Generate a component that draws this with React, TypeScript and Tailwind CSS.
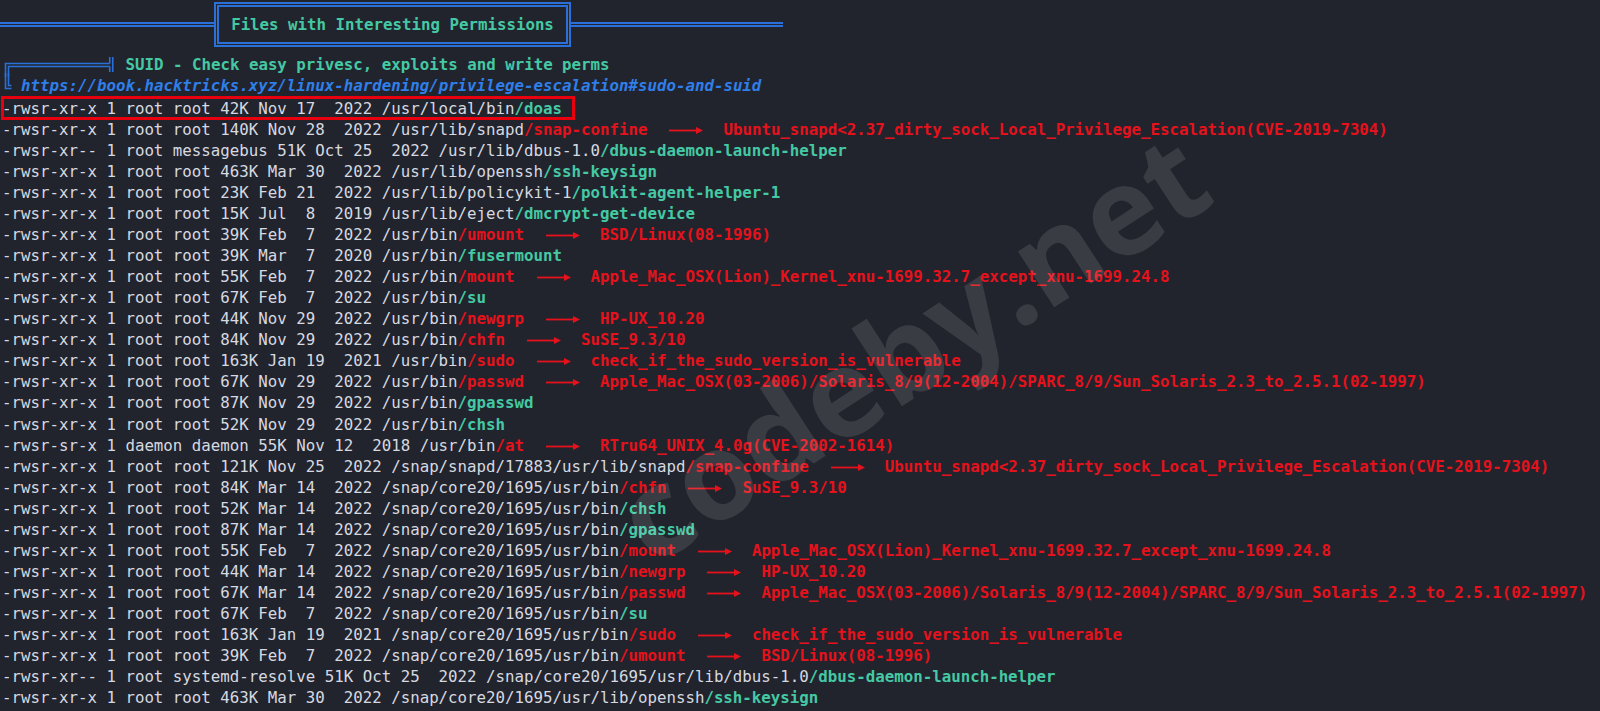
import React from "react";

type Row = {
    pre: string
    hit: string
    kind: "red" | "teal"
    note?: string
}

const LION = "Apple_Mac_OSX(Lion)_Kernel_xnu-1699.32.7_except_xnu-1699.24.8";
const PASSWD = "Apple_Mac_OSX(03-2006)/Solaris_8/9(12-2004)/SPARC_8/9/Sun_Solaris_2.3_to_2.5.1(02-1997)";
const SNAPD = "Ubuntu_snapd<2.37_dirty_sock_Local_Privilege_Escalation(CVE-2019-7304)";
const SUDO = "check_if_the_sudo_version_is_vulnerable";
const CORE = "/snap/core20/1695/usr/bin";

const rows: Row[] = [
    { pre: "-rwsr-xr-x 1 root root 42K Nov 17  2022 /usr/local/bin", hit: "/doas", kind: "teal" },
    { pre: "-rwsr-xr-x 1 root root 140K Nov 28  2022 /usr/lib/snapd", hit: "/snap-confine", kind: "red", note: SNAPD },
    { pre: "-rwsr-xr-- 1 root messagebus 51K Oct 25  2022 /usr/lib/dbus-1.0", hit: "/dbus-daemon-launch-helper", kind: "teal" },
    { pre: "-rwsr-xr-x 1 root root 463K Mar 30  2022 /usr/lib/openssh", hit: "/ssh-keysign", kind: "teal" },
    { pre: "-rwsr-xr-x 1 root root 23K Feb 21  2022 /usr/lib/policykit-1", hit: "/polkit-agent-helper-1", kind: "teal" },
    { pre: "-rwsr-xr-x 1 root root 15K Jul  8  2019 /usr/lib/eject", hit: "/dmcrypt-get-device", kind: "teal" },
    { pre: "-rwsr-xr-x 1 root root 39K Feb  7  2022 /usr/bin", hit: "/umount", kind: "red", note: "BSD/Linux(08-1996)" },
    { pre: "-rwsr-xr-x 1 root root 39K Mar  7  2020 /usr/bin", hit: "/fusermount", kind: "teal" },
    { pre: "-rwsr-xr-x 1 root root 55K Feb  7  2022 /usr/bin", hit: "/mount", kind: "red", note: LION },
    { pre: "-rwsr-xr-x 1 root root 67K Feb  7  2022 /usr/bin", hit: "/su", kind: "teal" },
    { pre: "-rwsr-xr-x 1 root root 44K Nov 29  2022 /usr/bin", hit: "/newgrp", kind: "red", note: "HP-UX_10.20" },
    { pre: "-rwsr-xr-x 1 root root 84K Nov 29  2022 /usr/bin", hit: "/chfn", kind: "red", note: "SuSE_9.3/10" },
    { pre: "-rwsr-xr-x 1 root root 163K Jan 19  2021 /usr/bin", hit: "/sudo", kind: "red", note: SUDO },
    { pre: "-rwsr-xr-x 1 root root 67K Nov 29  2022 /usr/bin", hit: "/passwd", kind: "red", note: PASSWD },
    { pre: "-rwsr-xr-x 1 root root 87K Nov 29  2022 /usr/bin", hit: "/gpasswd", kind: "teal" },
    { pre: "-rwsr-xr-x 1 root root 52K Nov 29  2022 /usr/bin", hit: "/chsh", kind: "teal" },
    { pre: "-rwsr-sr-x 1 daemon daemon 55K Nov 12  2018 /usr/bin", hit: "/at", kind: "red", note: "RTru64_UNIX_4.0g(CVE-2002-1614)" },
    { pre: "-rwsr-xr-x 1 root root 121K Nov 25  2022 /snap/snapd/17883/usr/lib/snapd", hit: "/snap-confine", kind: "red", note: SNAPD },
    { pre: `-rwsr-xr-x 1 root root 84K Mar 14  2022 ${CORE}`, hit: "/chfn", kind: "red", note: "SuSE_9.3/10" },
    { pre: `-rwsr-xr-x 1 root root 52K Mar 14  2022 ${CORE}`, hit: "/chsh", kind: "teal" },
    { pre: `-rwsr-xr-x 1 root root 87K Mar 14  2022 ${CORE}`, hit: "/gpasswd", kind: "teal" },
    { pre: `-rwsr-xr-x 1 root root 55K Feb  7  2022 ${CORE}`, hit: "/mount", kind: "red", note: LION },
    { pre: `-rwsr-xr-x 1 root root 44K Mar 14  2022 ${CORE}`, hit: "/newgrp", kind: "red", note: "HP-UX_10.20" },
    { pre: `-rwsr-xr-x 1 root root 67K Mar 14  2022 ${CORE}`, hit: "/passwd", kind: "red", note: PASSWD },
    { pre: `-rwsr-xr-x 1 root root 67K Feb  7  2022 ${CORE}`, hit: "/su", kind: "teal" },
    { pre: `-rwsr-xr-x 1 root root 163K Jan 19  2021 ${CORE}`, hit: "/sudo", kind: "red", note: SUDO },
    { pre: `-rwsr-xr-x 1 root root 39K Feb  7  2022 ${CORE}`, hit: "/umount", kind: "red", note: "BSD/Linux(08-1996)" },
    { pre: "-rwsr-xr-- 1 root systemd-resolve 51K Oct 25  2022 /snap/core20/1695/usr/lib/dbus-1.0", hit: "/dbus-daemon-launch-helper", kind: "teal" },
    { pre: "-rwsr-xr-x 1 root root 463K Mar 30  2022 /snap/core20/1695/usr/lib/openssh", hit: "/ssh-keysign", kind: "teal" },
]

// the ligature "--->" as drawn by the terminal font
function Arrow() {
    return (
        <svg width="38" height="21" className="inline-block align-top overflow-visible">
            <line x1="3" y1="11.5" x2="33" y2="11.5" stroke="#e5121c" strokeWidth="1.8" />
            <path d="M30 8 L37 11.5 L30 15 Z" fill="#e5121c" />
        </svg>
    )
}

const BLUE = "#2b6fd8";

// ╔══════════╣
function Bracket() {
    return (
        <svg width="114" height="21" className="inline-block align-top overflow-visible" fill="none" stroke={BLUE} strokeWidth="1.6">
            <path d="M3.5 23 V9.5 H107.75" />
            <path d="M6.5 23 V12.5 H107.75" />
            <path d="M107.75 3 V9.5 M107.75 12.5 V18" />
            <path d="M110.75 3 V18" />
        </svg>
    )
}

// ╚
function Corner() {
    return (
        <svg width="9.5" height="21" className="inline-block align-top overflow-visible" fill="none" stroke={BLUE} strokeWidth="1.6">
            <path d="M3.5 -2 V13.5 H9.5" />
            <path d="M6.5 -2 V10.5 H9.5" />
        </svg>
    )
}

export default function App() {
    return (
        <div className="relative w-full h-[711px] overflow-hidden bg-[#22242d] font-['DejaVu_Sans_Mono',monospace] text-[15.78px] text-[#d6d9e0]">

            {/* section title */}
            <div className="h-[54px]">
                <div className="flex items-center h-[49px]">
                    <div className="w-[214px] h-[5px] border-y-2 border-[#2b6fd8]" />
                    <div className="w-[357px] h-[45px] border-2 border-[#2b6fd8] p-[1px]">
                        <div className="h-full border-2 border-[#2b6fd8] flex items-center justify-center font-bold text-[#44c9a4]">
                            Files with Interesting Permissions
                        </div>
                    </div>
                    <div className="w-[212px] h-[5px] border-y-2 border-[#2b6fd8]" />
                </div>
            </div>

            <div className="pl-[2px] leading-[21.07px] whitespace-pre">
                <div className="h-[21.07px]">
                    <Bracket /> <span className="font-bold text-[#44c9a4]">SUID - Check easy privesc, exploits and write perms</span>
                </div>
                <div className="h-[22.5px]">
                    <Corner /> <span className="font-bold italic text-[#2f7fea]">https://book.hacktricks.xyz/linux-hardening/privilege-escalation#sudo-and-suid</span>
                </div>

                {rows.map((r, i) => (
                    <div key={i} className="relative h-[21.07px]">
                        <span>{r.pre}</span>
                        <span className={r.kind === "red" ? "font-bold text-[#e5121c]" : "font-bold text-[#44c9a4]"}>{r.hit}</span>
                        {r.note ? (
                            <>
                                <span>  </span>
                                <Arrow />
                                <span>  </span>
                                <span className="font-bold text-[#e5121c]">{r.note}</span>
                            </>
                        ) : null}
                        {i === 0 ? (
                            <div className="absolute left-[-1px] top-[-2px] w-[574px] h-[24px] border-[3px] border-[#e8000e]" />
                        ) : null}
                    </div>
                ))}
            </div>

            {/* watermark */}
            <div className="pointer-events-none absolute inset-0">
                <div className="absolute left-[910px] top-[345px] -translate-x-1/2 -translate-y-1/2 -rotate-[33deg] font-['Open_Sans',sans-serif] font-bold text-[122px] leading-none text-white/[0.11] whitespace-nowrap">
                    codeby.net
                </div>
            </div>
        </div>
    )
}
